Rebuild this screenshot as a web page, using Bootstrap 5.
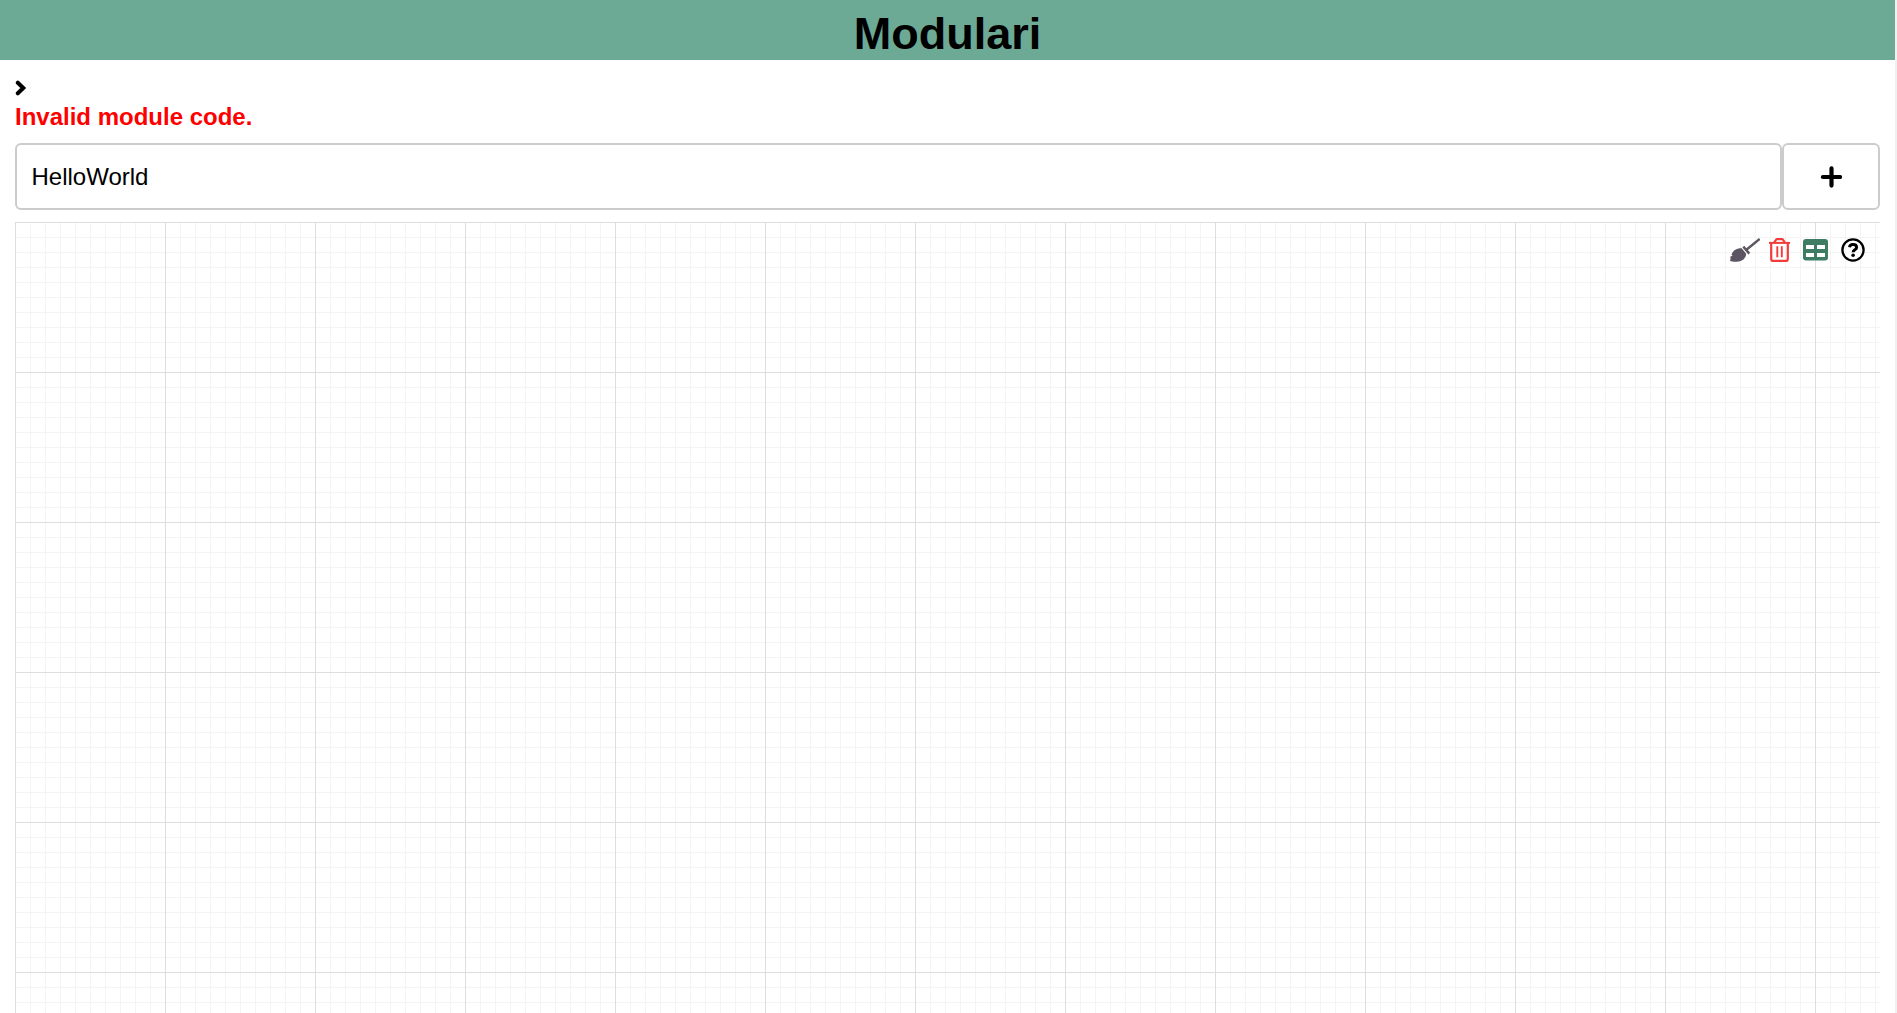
<!DOCTYPE html>
<html lang="en"><head><meta charset="utf-8"><title>Modulari</title>
<link href="https://cdn.jsdelivr.net/npm/bootstrap@5.3.0/dist/css/bootstrap.min.css" rel="stylesheet">
<style>
html{background:#f1f1f1;height:100%;overflow:hidden}
body{width:1895px;height:100vh;font-family:"Liberation Sans",Arial,sans-serif;color:#000;background:#fff;font-size:24px;line-height:28px}
.title-bar{height:60px;background:#6daa95}
.title-bar h1{font-size:45px;line-height:60px;padding-top:4px}
.workspace{padding:16px 15px 0}
.error-text{color:#f00;height:28px;margin-top:3px}
.code-row{margin-top:12px}
.code-input,.add-btn{height:67px;border:2px solid #ccc;border-radius:6px;background:#fff;color:#000}
.code-input{font-size:24px;padding:0 14.5px}
.add-btn{width:98px}
.canvas-grid{margin-top:12px;padding:16px 15px;
background-image:linear-gradient(#dedede 1px,transparent 1px),linear-gradient(90deg,#dedede 1px,transparent 1px),linear-gradient(#f4f4f4 1px,transparent 1px),linear-gradient(90deg,#f4f4f4 1px,transparent 1px);
background-size:150px 150px,150px 150px,15px 15px,15px 15px}
.tool-broom{margin-right:9px}
.tool-trash,.tool-table{margin-right:13px}
svg{display:block}
</style>
<script src="https://cdn.jsdelivr.net/npm/bootstrap@5.3.0/dist/js/bootstrap.bundle.min.js"></script>
</head><body class="d-flex flex-column">
<header class="title-bar text-center"><h1 class="fw-bold m-0">Modulari</h1></header>
<main class="workspace d-flex flex-column flex-grow-1">
<div><svg width="12" height="24" viewBox="0 0 12 24"><path d="M2.800 6.700 8.300 12l-5.500 5.300" fill="none" stroke="#000" stroke-width="4" stroke-linecap="round"/></svg></div>
<div class="error-text fw-bold">Invalid module code.</div>
<div class="d-flex code-row"><input class="code-input flex-grow-1" value="HelloWorld" aria-label="Module code"><button class="add-btn d-flex align-items-center justify-content-center p-0" aria-label="Add"><svg width="22" height="22" viewBox="0 0 22 22"><path d="M11.500 2.400v17.200M2.900 11h17.200" stroke="#000" stroke-width="4.200" stroke-linecap="round"/></svg></button></div>
<section class="canvas-grid flex-grow-1"><div class="d-flex justify-content-end">
<svg class="tool-broom" width="30" height="24" viewBox="0 0 30 24"><path d="M0 23c.8-2.500.2-3.200.6-4.800l2-.3-1.100-1.300C3 12.300 6.500 10 11.700 10.200l4.500 5.600c-.3 4.600-3.700 7.600-9.200 7.900-3 .1-5 0-7-.7z" fill="#5d5662"/><path d="M13.300 8.600 19.300 15.600M17 11.200 29.700 1" stroke="#5d5662" stroke-width="2.400"/></svg>
<svg class="tool-trash" width="21" height="24" viewBox="0 0 21 24" fill="none" stroke="#f43b3b"><path d="M0 4.900h21" stroke-width="2"/><path d="M5 4.900 6.800 2q.5-.9 1.500-.9h4.400q1 0 1.500.9L16 4.900M2.200 4.900v16q0 2 2 2h12.600q2 0 2-2v-16" stroke-width="2.200"/><path d="M8.300 8.300v11M12.800 8.300v11" stroke-width="1.900"/></svg>
<svg class="tool-table" width="25" height="24" viewBox="0 0 25 24"><path fill="#3e7d64" d="M3 1h19q3 0 3 3v15.500q0 3-3 3H3q-3 0-3-3V4Q0 1 3 1z"/><path fill="#fff" d="M3 7h8v4H3zM14 7h8v4h-8zM3 15h8v4H3zM14 15h8v4h-8z"/></svg>
<svg class="tool-help" width="24" height="24" viewBox="0 0 24 24" fill="none" stroke="#000"><circle cx="12" cy="12" r="10.600" stroke-width="2.300"/><path d="M8.500 9.200C8.800 7.200 10 6.500 12 6.500c2.200 0 3.600 1.100 3.600 2.900 0 2.500-3.500 2.300-3.500 4.800" stroke-width="3"/><circle cx="12.100" cy="17.300" r="1.800" fill="#000" stroke="none"/></svg>
</div></section>
</main></body></html>
